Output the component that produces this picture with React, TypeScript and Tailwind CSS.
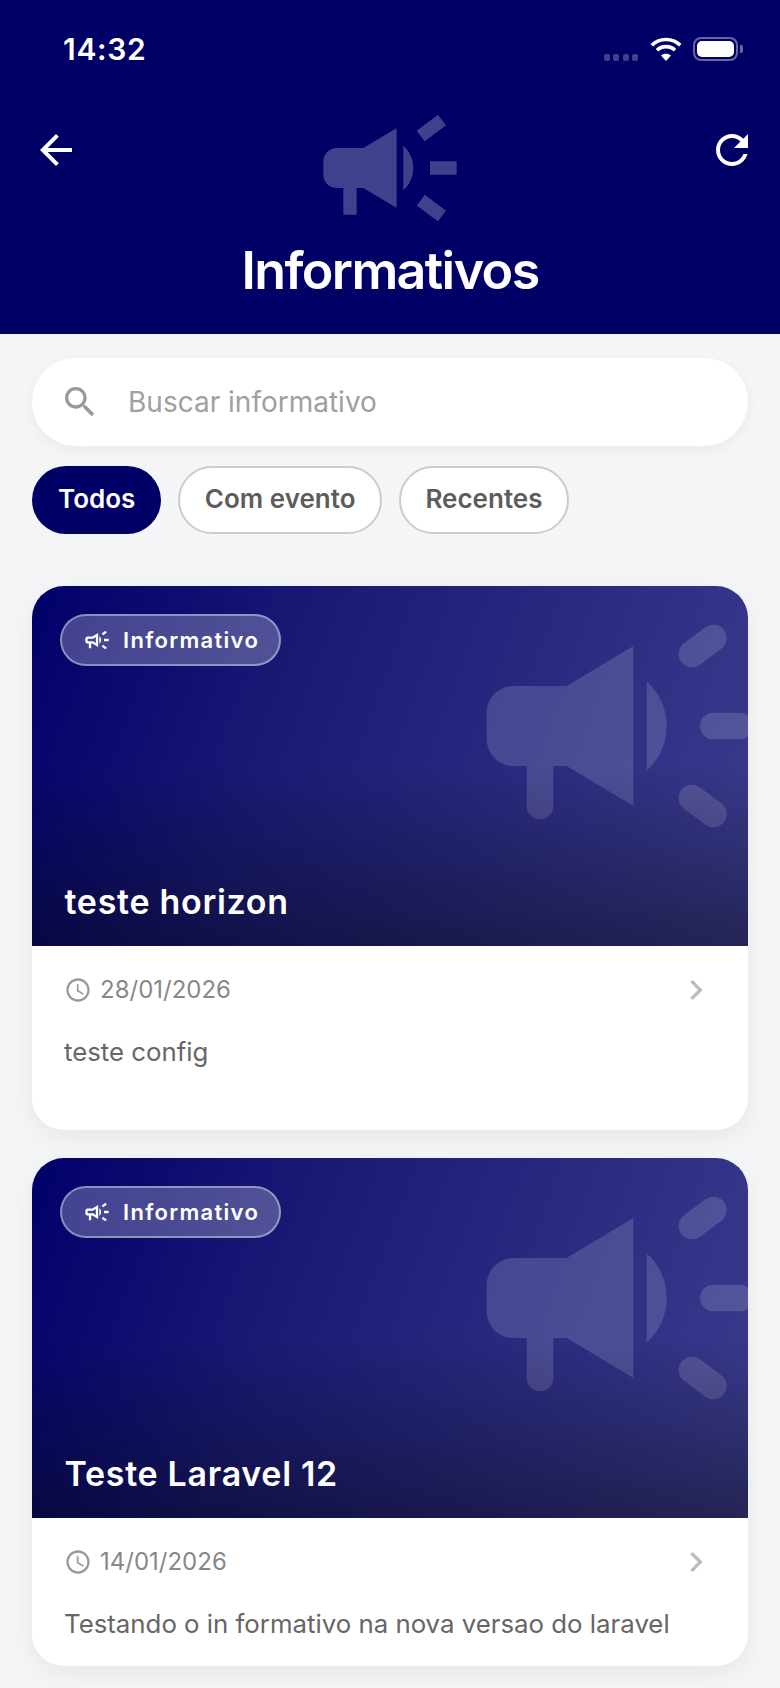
const FONT = "font-['Inter','Noto_Sans',sans-serif]";

// Material "campaign" glyph: hard-edged rays.
function CampaignSharp({ className }: { className?: string }) {
  return (
    <svg viewBox="0 0 24 24" className={className} fill="currentColor">
      <path d="M18 11v2h4v-2h-4zm-2 6.61c.96.71 2.21 1.65 3.2 2.39.4-.53.8-1.07 1.2-1.6-.99-.74-2.24-1.68-3.2-2.4-.4.54-.8 1.08-1.2 1.61zM20.4 5.6c-.4-.53-.8-1.07-1.2-1.6-.99.74-2.24 1.68-3.2 2.4.4.53.8 1.07 1.2 1.6.96-.72 2.21-1.65 3.2-2.4zM4 9c-1.1 0-2 .9-2 2v2c0 1.1.9 2 2 2h1v4h2v-4h1l5 3V6L8 9H4zm11.5 3c0-1.33-.58-2.53-1.5-3.35v6.69c.92-.81 1.5-2.01 1.5-3.34z" />
    </svg>
  );
}

// Hollow-bodied variant for the small badge.
function CampaignOutline({ className }: { className?: string }) {
  return (
    <svg viewBox="0 0 24 24" className={className} fill="currentColor">
      <path d="M18 11v2h4v-2h-4zm-2 6.61c.96.71 2.21 1.65 3.2 2.39.4-.53.8-1.07 1.2-1.6-.99-.74-2.24-1.68-3.2-2.4-.4.54-.8 1.08-1.2 1.61zM20.4 5.6c-.4-.53-.8-1.07-1.2-1.6-.99.74-2.24 1.68-3.2 2.4.4.53.8 1.07 1.2 1.6.96-.72 2.21-1.65 3.2-2.4zM4 9c-1.1 0-2 .9-2 2v2c0 1.1.9 2 2 2h1v4h2v-4h1l5 3V6L8 9H4zm5.03 1.71L11 9.53v4.94l-1.97-1.18-.48-.29H4v-2h4.55l.48-.29zM15.5 12c0-1.33-.58-2.53-1.5-3.35v6.69c.92-.81 1.5-2.01 1.5-3.34z" />
    </svg>
  );
}

// Rounded rays and handle, used as the card watermark.
function CampaignRound({ className }: { className?: string }) {
  return (
    <svg viewBox="0 0 24 24" className={className} fill="currentColor">
      <path d="M8 9H4c-1.1 0-2 .9-2 2v2c0 1.1.9 2 2 2h1v3c0 .55.45 1 1 1s1-.45 1-1v-3h1l5 3V6L8 9zm7.5 3c0-1.33-.58-2.53-1.5-3.35v6.69c.92-.81 1.5-2.01 1.5-3.34z" />
      <g stroke="currentColor" strokeWidth="2" strokeLinecap="round" fill="none">
        <path d="M19 12h2" />
        <path d="M17.4 6.6L19 5.4" />
        <path d="M17.4 17.4L19 18.6" />
      </g>
    </svg>
  );
}

function StatusBar() {
  return (
    <div className="absolute left-0 right-0 top-0 h-[80px]">
      <span className="absolute left-[63px] top-[31px] text-[30px] leading-[36px] font-semibold tracking-[0.7px] text-white">14:32</span>
      <div className="absolute left-[604px] top-[54px] flex gap-[3.4px]">
        {[0, 1, 2, 3].map((i) => (
          <span key={i} className="h-[7px] w-[6px] rounded-[2px] bg-white/25" />
        ))}
      </div>
      <svg viewBox="0 0 32 24" className="absolute left-[650px] top-[37px] h-[24px] w-[32px]" fill="none" stroke="white" strokeWidth="3.6">
        <path d="M1.8 8.2C9.6 .6 22.4 .6 30.2 8.2" />
        <path d="M7 13.2C11.8 8.4 20.2 8.4 25 13.2" />
        <path d="M16 24l-5-5.4c2.8-2.4 7.2-2.4 10 0z" fill="white" stroke="none" />
      </svg>
      <div className="absolute left-[693px] top-[37px] flex h-[24px] w-[45px] items-center justify-center rounded-[8px] border-2 border-white/40">
        <span className="h-[16px] w-[37px] rounded-[5px] bg-white" />
      </div>
      <span className="absolute left-[740px] top-[45px] h-[8px] w-[3px] rounded-r-[2px] bg-white/40" />
    </div>
  );
}

function Header() {
  return (
    <header className="relative flex h-[334px] flex-col items-center bg-[#000066] pt-[88px]">
      <StatusBar />
      <svg viewBox="0 0 24 24" className="absolute left-[32px] top-[126px] h-[48px] w-[48px]" fill="white">
        <path d="M20 11H7.83l5.59-5.59L12 4l-8 8 8 8 1.41-1.41L7.83 13H20v-2z" />
      </svg>
      <svg viewBox="0 0 24 24" className="absolute left-[708px] top-[126px] h-[48px] w-[48px]" fill="white">
        <path d="M17.65 6.35C16.2 4.9 14.21 4 12 4c-4.42 0-7.99 3.58-7.99 8s3.57 8 7.99 8c3.73 0 6.84-2.55 7.73-6h-2.08c-.82 2.33-3.04 4-5.65 4-3.31 0-6-2.69-6-6s2.69-6 6-6c1.66 0 3.14.69 4.22 1.78L13 11h7V4l-2.35 2.35z" />
      </svg>
      <CampaignSharp className="h-[160px] w-[160px] text-white/25" />
      <h1 className="mt-px text-[52px] leading-[44px] font-semibold tracking-[-1.6px] text-white">Informativos</h1>
    </header>
  );
}

function SearchBar() {
  return (
    <div className="flex h-[88px] items-center rounded-[44px] bg-white pl-[28px] shadow-[0_4px_14px_rgba(0,0,0,0.05)]">
      <svg viewBox="0 0 24 24" className="h-[40px] w-[40px]" fill="#999999">
        <path d="M15.5 14h-.79l-.28-.27C15.41 12.59 16 11.11 16 9.5 16 5.91 13.09 3 9.5 3S3 5.91 3 9.5 5.91 16 9.5 16c1.61 0 3.09-.59 4.23-1.57l.27.28v.79l5 4.99L20.49 19l-4.99-5zm-6 0C7.01 14 5 11.99 5 9.5S7.01 5 9.5 5 14 7.01 14 9.5 11.99 14 9.5 14z" />
      </svg>
      <span className="ml-[28px] text-[28px] leading-[36px] text-[#a0a0a0]">Buscar informativo</span>
    </div>
  );
}

function Chip({ label, active }: { label: string; active?: boolean }) {
  return active ? (
    <span className="flex h-[68px] items-center rounded-[34px] bg-[#000066] px-[26px] pb-[3px] text-[26px] font-semibold text-white">
      {label}
    </span>
  ) : (
    <span className="flex h-[68px] items-center rounded-[34px] border-2 border-[#cccccc] bg-white px-[24.5px] pb-[3px] text-[26px] font-semibold text-[#5c5c5c]">
      {label}
    </span>
  );
}

function Card({ title, date, text, blankLine }: { title: string; date: string; text: string; blankLine?: boolean }) {
  return (
    <article className="overflow-hidden rounded-[32px] bg-white shadow-[0_8px_24px_rgba(0,0,0,0.06)]">
      <div className="relative h-[360px] overflow-hidden bg-[linear-gradient(110deg,#00006a_0%,#1a1a75_35%,#3c3c8e_100%)]">
        <CampaignRound className="absolute right-[-32px] top-[-20px] h-[320px] w-[320px] text-white/15" />
        <div className="absolute inset-0 bg-[linear-gradient(180deg,rgba(0,0,0,0)_50%,rgba(0,0,0,0.4)_100%)]" />
        <div className="absolute left-[28px] top-[28px] flex h-[52px] items-center gap-[12px] rounded-[26px] border-2 border-white/40 bg-white/25 pl-[21px] pr-[20px]">
          <CampaignOutline className="h-[28px] w-[28px] text-white" />
          <span className="text-[22px] font-semibold tracking-[1.3px] text-white">Informativo</span>
        </div>
        <h2 className="absolute bottom-[22px] left-[32.5px] text-[34px] leading-[44px] font-semibold tracking-[0.7px] text-white">{title}</h2>
      </div>
      <div className="px-[32px] pb-[24px] pt-[24px]">
        <div className="flex h-[40px] items-center justify-between">
          <div className="flex items-center gap-[8px]">
            <svg viewBox="0 0 24 24" className="h-[28px] w-[28px]" fill="#999999">
              <path d="M11.99 2C6.47 2 2 6.48 2 12s4.47 10 9.99 10C17.52 22 22 17.52 22 12S17.52 2 11.99 2zM12 20c-4.42 0-8-3.58-8-8s3.58-8 8-8 8 3.58 8 8-3.58 8-8 8zm.5-13H11v6l5.25 3.15.75-1.23-4.5-2.67z" />
            </svg>
            <span className="text-[24px] text-[#888888]">{date}</span>
          </div>
          <svg viewBox="0 0 24 24" className="h-[40px] w-[40px]" fill="#bbbbbb">
            <path d="M10 6L8.59 7.41 13.17 12l-4.58 4.59L10 18l6-6z" />
          </svg>
        </div>
        <p className="mt-[24px] text-[25.8px] leading-[36px] text-[#666666]">
          {text}
          {blankLine && <br />}
          {blankLine && "\u00a0"}
        </p>
      </div>
    </article>
  );
}

export default function App() {
  return (
    <div className={`h-[1688px] w-[780px] overflow-hidden bg-[#f4f5f7] ${FONT}`}>
      <Header />
      <main className="px-[32px] pt-[24px]">
        <SearchBar />
        <div className="mt-[20px] flex gap-[17px]">
          <Chip label="Todos" active />
          <Chip label="Com evento" />
          <Chip label="Recentes" />
        </div>
        <div className="mt-[52px] flex flex-col gap-[28px]">
          <Card title="teste horizon" date="28/01/2026" text="teste config" blankLine />
          <Card title="Teste Laravel 12" date="14/01/2026" text="Testando o in formativo na nova versao do laravel" />
        </div>
      </main>
    </div>
  );
}
